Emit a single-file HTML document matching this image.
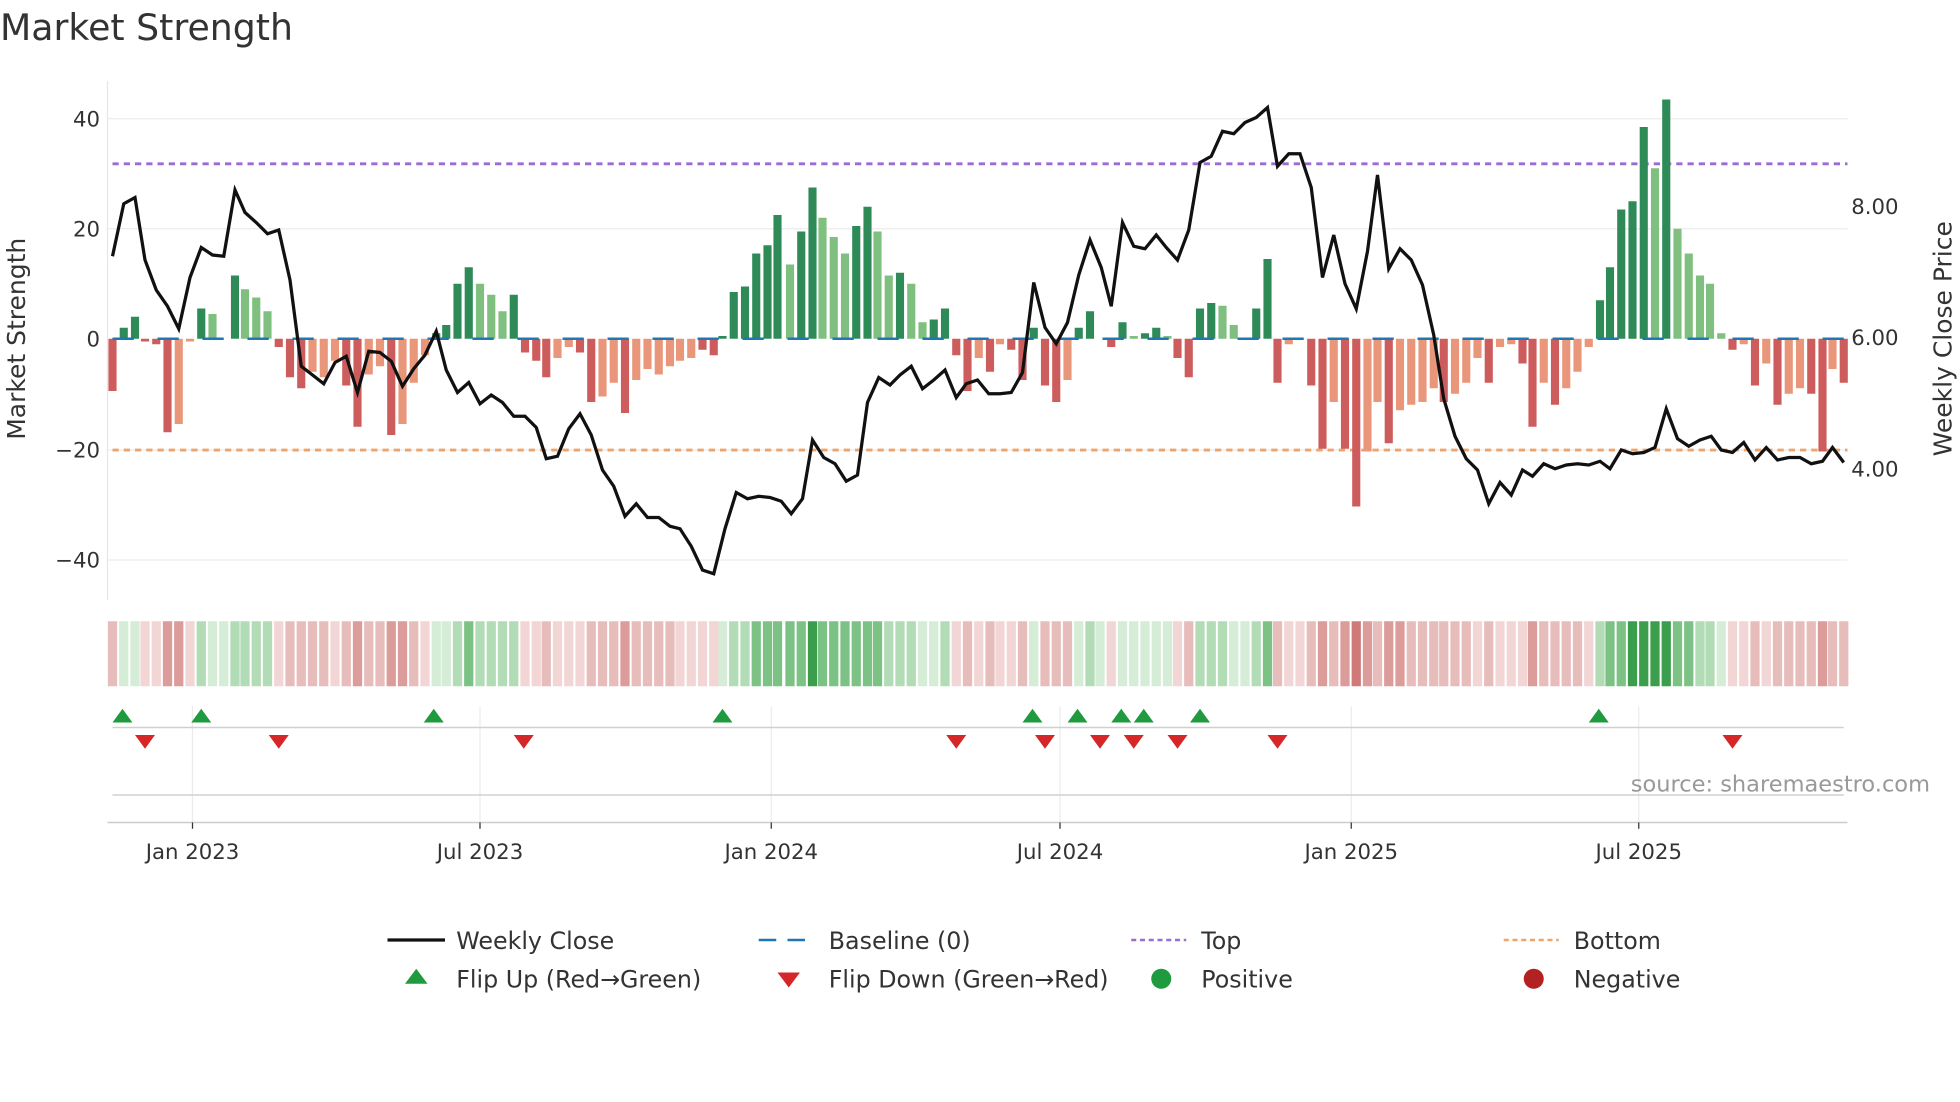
<!DOCTYPE html>
<html><head><meta charset="utf-8"><style>
html,body{margin:0;padding:0;background:#fff;}
svg{display:block;}
text{font-family:"DejaVu Sans","Liberation Sans",sans-serif;fill:#333;}
</style></head><body>
<svg width="1960" height="1102" viewBox="0 0 1568 881.6" xmlns="http://www.w3.org/2000/svg">
<rect width="1568" height="882" fill="#fff"/>
<text x="0" y="32" font-size="29">Market Strength</text>
<g stroke="#ececec" stroke-width="1">
<path d="M86 95H1478M86 183H1478M86 360H1478M86 448H1478"/>
</g>
<path d="M86 65V480" stroke="#e6e6e6"/>
<g font-size="17" text-anchor="end">
<text x="80" y="101">40</text><text x="80" y="189">20</text><text x="80" y="277">0</text>
<text x="80" y="366">−20</text><text x="80" y="454">−40</text>
</g>
<text transform="translate(20,271) rotate(-90)" font-size="20" text-anchor="middle">Market Strength</text>
<g font-size="17">
<text x="1481" y="171">8.00</text><text x="1481" y="276">6.00</text><text x="1481" y="381">4.00</text>
</g>
<text transform="translate(1561,271) rotate(-90)" font-size="20" text-anchor="middle">Weekly Close Price</text>
<path d="M90 131H1478" stroke="#9b6bd6" stroke-width="2.3" stroke-dasharray="5,4"/>
<path d="M90 360H1478" stroke="#eea46a" stroke-width="2.3" stroke-dasharray="5,4"/>
<g transform="translate(0,271) scale(1,-4.4)" stroke-width="6.5" fill="none">
<path stroke="#2e8b57" d="M99 0V2M108 0V4M161 0V5.5M188 0V11.5M349 0V1M357 0V2.5M366 0V10M375 0V13M411 0V8M578 0V0.5M587 0V8.5M596 0V9.5M605 0V15.5M614 0V17M622 0V22.5M641 0V19.5M650 0V27.5M685 0V20.5M694 0V24M720 0V12M747 0V3.5M756 0V5.5M827 0V2M863 0V2M872 0V5M898 0V3M916 0V1M925 0V2M960 0V5.5M969 0V6.5M1005 0V5.5M1014 0V14.5M1280 0V7M1288 0V13M1297 0V23.5M1306 0V25M1315 0V38.5M1333 0V43.5"/>
<path stroke="#7fbf7f" d="M170 0V4.5M196 0V9M205 0V7.5M214 0V5M384 0V10M393 0V8M402 0V5M632 0V13.5M658 0V22M667 0V18.5M676 0V15.5M702 0V19.5M711 0V11.5M729 0V10M738 0V3M907 0V0.5M934 0V0.5M978 0V6M987 0V2.5M1324 0V31M1342 0V20M1351 0V15.5M1360 0V11.5M1368 0V10M1377 0V1"/>
<path stroke="#cd5c5c" d="M90 0V-9.5M116 0V-.5M125 0V-1M134 0V-17M223 0V-1.5M232 0V-7M241 0V-9M277 0V-8.5M286 0V-16M313 0V-17.5M420 0V-2.5M429 0V-4M437 0V-7M464 0V-2.5M473 0V-11.5M500 0V-13.5M562 0V-2M571 0V-3M765 0V-3M774 0V-9.5M792 0V-6M809 0V-2M818 0V-7.5M836 0V-8.5M845 0V-11.5M889 0V-1.5M942 0V-3.5M951 0V-7M1022 0V-8M1049 0V-8.5M1058 0V-20M1076 0V-20M1085 0V-30.5M1111 0V-19M1155 0V-11.5M1191 0V-8M1218 0V-4.5M1226 0V-16M1244 0V-12M1386 0V-2M1404 0V-8.5M1422 0V-12M1449 0V-10M1458 0V-20.5M1475 0V-8"/>
<path stroke="#e9967a" d="M143 0V-15.5M152 0V-.5M250 0V-6M259 0V-7M268 0V-4M295 0V-6.5M304 0V-5M322 0V-15.5M331 0V-8M340 0V-3M446 0V-3.5M455 0V-1.5M482 0V-10.5M491 0V-8M509 0V-7.5M518 0V-5.5M527 0V-6.5M536 0V-5M544 0V-4M553 0V-3.5M783 0V-3.5M800 0V-1M854 0V-7.5M1031 0V-1M1067 0V-11.5M1094 0V-20.5M1102 0V-11.5M1120 0V-13M1129 0V-12M1138 0V-11.5M1147 0V-9M1164 0V-10M1173 0V-8M1182 0V-3.5M1200 0V-1.5M1209 0V-1M1235 0V-8M1253 0V-9M1262 0V-6M1271 0V-1.5M1395 0V-1M1413 0V-4.5M1431 0V-10M1440 0V-9M1466 0V-5.5"/>
</g>
<path d="M90 271H1478" stroke="#1f77b4" stroke-width="2" stroke-dasharray="17,19"/>
<polyline fill="none" stroke="#111" stroke-width="2.6" stroke-linejoin="miter" points="90,205 99,163 108,158 116,208 125,232 134,245 143,263 152,222 161,198 170,204 179,205 188,152 196,170 205,178 214,187 223,184 232,224 241,293 250,300 259,307 268,290 277,285 286,314 295,281 304,282 313,289 322,309 331,295 340,284 349,265 357,296 366,314 375,306 384,323 393,316 402,322 411,333 420,333 429,342 437,367 446,365 455,343 464,331 473,348 482,376 491,389 500,413 509,403 518,414 527,414 536,421 544,423 553,437 562,456 571,459 580,423 589,394 598,399 607,397 616,398 625,401 633,411 642,399 650,352 659,366 668,371 677,385 686,380 694,322 703,302 712,308 720,300 729,293 738,311 747,304 756,296 765,318 773,307 782,304 791,315 800,315 809,314 818,298 827,226 836,262 845,275 854,258 863,220 872,192 881,214 889,245 898,178 907,197 916,199 925,188 933,198 942,208 951,184 960,130 969,125 978,105 987,107 996,98 1005,94 1014,86 1022,133 1031,123 1040,123 1049,150 1058,222 1067,188 1076,227 1085,247 1094,201 1102,140 1111,215 1120,199 1129,208 1138,228 1147,268 1155,319 1164,349 1173,367 1182,376 1191,403 1200,386 1209,396 1218,376 1226,381 1235,371 1244,375 1253,372 1262,371 1271,372 1280,369 1288,375 1297,360 1306,363 1315,362 1324,358 1333,327 1342,351 1351,357 1360,352 1369,349 1377,360 1386,362 1395,354 1404,368 1413,358 1422,368 1431,366 1440,366 1449,371 1458,369 1466,358 1475,370"/>
<g stroke-width="7.4" fill="none">
<path stroke="#d5ecd6" d="M99 497V549M108 497V549M170 497V549M179 497V549M349 497V549M357 497V549M578 497V549M738 497V549M747 497V549M827 497V549M863 497V549M880 497V549M898 497V549M907 497V549M916 497V549M925 497V549M934 497V549M987 497V549M996 497V549M1377 497V549"/>
<path stroke="#b2dcb5" d="M161 497V549M188 497V549M196 497V549M205 497V549M214 497V549M366 497V549M384 497V549M393 497V549M402 497V549M411 497V549M587 497V549M596 497V549M711 497V549M720 497V549M729 497V549M756 497V549M872 497V549M960 497V549M969 497V549M978 497V549M1005 497V549M1280 497V549M1360 497V549M1368 497V549"/>
<path stroke="#7cc285" d="M375 497V549M605 497V549M614 497V549M622 497V549M632 497V549M641 497V549M658 497V549M667 497V549M676 497V549M685 497V549M694 497V549M702 497V549M1014 497V549M1288 497V549M1297 497V549M1342 497V549M1351 497V549"/>
<path stroke="#3b9e4c" d="M650 497V549M1306 497V549M1315 497V549M1324 497V549M1333 497V549"/>
<path stroke="#f2d6d5" d="M116 497V549M125 497V549M152 497V549M223 497V549M268 497V549M340 497V549M420 497V549M429 497V549M446 497V549M455 497V549M464 497V549M544 497V549M553 497V549M562 497V549M571 497V549M765 497V549M783 497V549M800 497V549M809 497V549M889 497V549M942 497V549M1031 497V549M1040 497V549M1182 497V549M1200 497V549M1209 497V549M1218 497V549M1271 497V549M1386 497V549M1395 497V549M1413 497V549"/>
<path stroke="#e7bdbc" d="M90 497V549M232 497V549M241 497V549M250 497V549M259 497V549M277 497V549M295 497V549M304 497V549M331 497V549M437 497V549M473 497V549M482 497V549M491 497V549M509 497V549M518 497V549M527 497V549M536 497V549M774 497V549M792 497V549M818 497V549M836 497V549M845 497V549M854 497V549M951 497V549M1022 497V549M1049 497V549M1067 497V549M1102 497V549M1129 497V549M1138 497V549M1147 497V549M1155 497V549M1164 497V549M1173 497V549M1191 497V549M1235 497V549M1244 497V549M1253 497V549M1262 497V549M1404 497V549M1422 497V549M1431 497V549M1440 497V549M1449 497V549M1466 497V549M1475 497V549"/>
<path stroke="#dc9c9a" d="M134 497V549M143 497V549M286 497V549M313 497V549M322 497V549M500 497V549M1058 497V549M1076 497V549M1094 497V549M1111 497V549M1120 497V549M1226 497V549M1458 497V549"/>
<path stroke="#cf7a78" d="M1085 497V549"/>
</g>
<g stroke="#ececec" stroke-width="1">
<path d="M154 565V658M384 565V658M617 565V658M848 565V658M1081 565V658M1311 565V658"/>
</g>
<path d="M90 582H1475M90 636H1475" stroke="#d0d0d0" stroke-width="1.2"/>
<path d="M86 658H1478" stroke="#ccc" stroke-width="1.2"/>
<g fill="#1f9a3f">
<path d="M90 578l8-11 8 11z M153 578l8-11 8 11z M339 578l8-11 8 11z M570 578l8-11 8 11z M818 578l8-11 8 11z M854 578l8-11 8 11z M889 578l8-11 8 11z M907 578l8-11 8 11z M952 578l8-11 8 11z M1271 578l8-11 8 11z"/>
</g>
<g fill="#d62728">
<path d="M108 588l8 11 8-11z M215 588l8 11 8-11z M411 588l8 11 8-11z M757 588l8 11 8-11z M828 588l8 11 8-11z M872 588l8 11 8-11z M899 588l8 11 8-11z M934 588l8 11 8-11z M1014 588l8 11 8-11z M1378 588l8 11 8-11z"/>
</g>
<text x="1544" y="633" font-size="18" text-anchor="end" style="fill:#999">source: sharemaestro.com</text>
<g stroke="#333" stroke-width="1"><path d="M154 658v5M384 658v5M617 658v5M848 658v5M1081 658v5M1311 658v5"/></g>
<g font-size="17" text-anchor="middle">
<text x="154" y="687">Jan 2023</text><text x="384" y="687">Jul 2023</text><text x="617" y="687">Jan 2024</text>
<text x="848" y="687">Jul 2024</text><text x="1081" y="687">Jan 2025</text><text x="1311" y="687">Jul 2025</text>
</g>
<g font-size="19">
<path d="M310 752H356" stroke="#111" stroke-width="2.6"/><text x="365" y="759">Weekly Close</text>
<path d="M607 752H651" stroke="#1f77b4" stroke-width="2" stroke-dasharray="14,9"/><text x="663" y="759">Baseline (0)</text>
<path d="M905 752H949" stroke="#9b6bd6" stroke-width="2" stroke-dasharray="4,3"/><text x="961" y="759">Top</text>
<path d="M1203 752H1247" stroke="#eea46a" stroke-width="2" stroke-dasharray="4,3"/><text x="1259" y="759">Bottom</text>
<path d="M324 787l9-12 9 12z" fill="#1f9a3f"/><text x="365" y="790">Flip Up (Red→Green)</text>
<path d="M622 778l9 12 9-12z" fill="#d62728"/><text x="663" y="790">Flip Down (Green→Red)</text>
<circle cx="929" cy="783" r="8" fill="#1f9a3f"/><text x="961" y="790">Positive</text>
<circle cx="1227" cy="783" r="8" fill="#b22222"/><text x="1259" y="790">Negative</text>
</g>
</svg>
</body></html>
